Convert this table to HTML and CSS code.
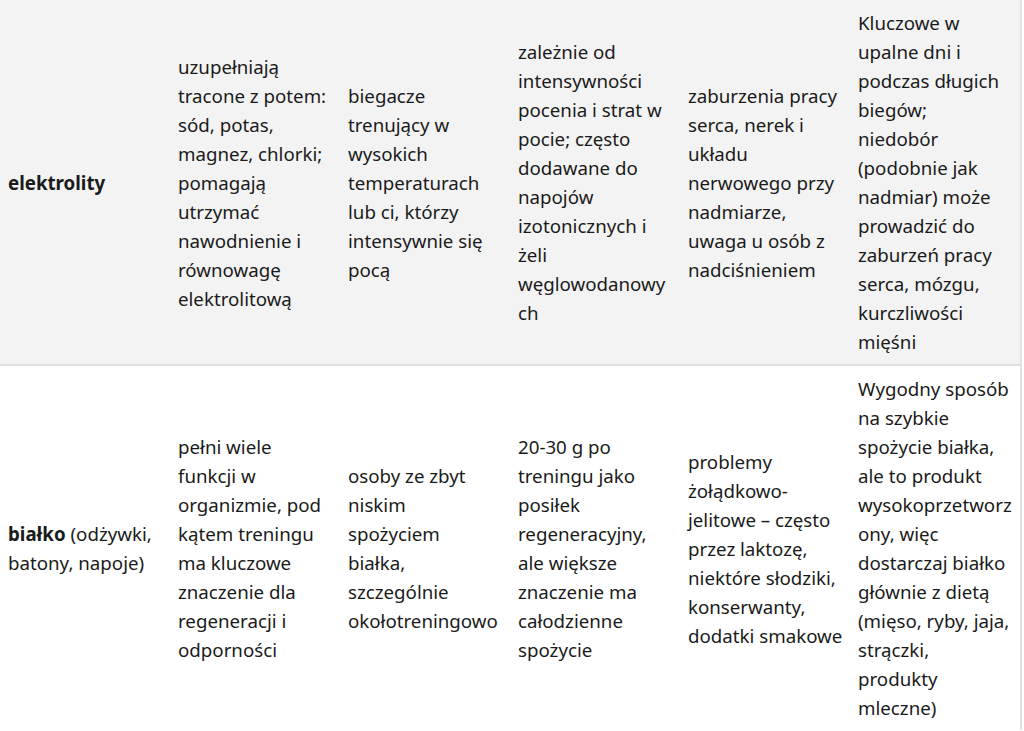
FILE: index.html
```html
<!DOCTYPE html>
<html lang="pl">
<head>
<meta charset="utf-8">
<link rel="stylesheet" href="styles.css">
</head>
<body>
<div class="frame">
<table class="supp">
  <colgroup>
    <col class="c"><col class="c"><col class="c"><col class="c"><col class="c"><col class="c">
  </colgroup>
  <tbody>
    <tr class="row-alt">
      <td><strong>elektrolity</strong></td>
      <td>uzupełniają tracone z potem: sód, potas, magnez, chlorki; pomagają utrzymać nawodnienie i równowagę elektrolitową</td>
      <td>biegacze trenujący w wysokich temperaturach lub ci, którzy intensywnie się pocą</td>
      <td>zależnie od intensywności pocenia i strat w pocie; często dodawane do napojów izotonicznych i żeli węglowodanowych</td>
      <td>zaburzenia pracy serca, nerek i układu nerwowego przy nadmiarze, uwaga u osób z nadciśnieniem</td>
      <td>Kluczowe w upalne dni i podczas długich biegów; niedobór (podobnie jak nadmiar) może prowadzić do zaburzeń pracy serca, mózgu, kurczliwości mięśni</td>
    </tr>
    <tr>
      <td><strong>białko</strong> (odżywki, batony, napoje)</td>
      <td>pełni wiele funkcji w organizmie, pod kątem treningu ma kluczowe znaczenie dla regeneracji i odporności</td>
      <td>osoby ze zbyt niskim spożyciem białka, szczególnie okołotreningowo</td>
      <td>20-30 g po treningu jako posiłek regeneracyjny, ale większe znaczenie ma całodzienne spożycie</td>
      <td>problemy żołądkowo-jelitowe – często przez laktozę, niektóre słodziki, konserwanty, dodatki smakowe</td>
      <td>Wygodny sposób na szybkie spożycie białka, ale to produkt wysokoprzetworzony, więc dostarczaj białko głównie z dietą (mięso, ryby, jaja, strączki, produkty mleczne)</td>
    </tr>
  </tbody>
</table>
</div>
</body>
</html>
```

FILE: styles.css
```css
html, body {
  margin: 0;
  padding: 0;
  background: #ffffff;
}
body {
  font-family: "Noto Sans", Inter, sans-serif;
  font-size: 18.72px;
  color: #1a1a1a;
  overflow: hidden;
}
.frame {
  width: 1020px;
  border-right: 2px solid #e2e2e2;
}
.supp {
  table-layout: fixed;
  border-collapse: collapse;
  width: 1020px;
}
.c {
  width: 170px;
}
.supp td {
  padding: 8px;
  vertical-align: middle;
  line-height: 29px;
  overflow-wrap: anywhere;
  text-align: left;
}
.supp td:nth-child(3) {
  padding-right: 11px;
}
.supp td:nth-child(5) {
  padding-right: 6px;
}
.supp tr {
  border-bottom: 2px solid #dfdfdf;
}
.supp tr:last-child {
  border-bottom: none;
}
.row-alt {
  background: #f3f3f3;
}
.supp strong {
  font-weight: 700;
}
```
